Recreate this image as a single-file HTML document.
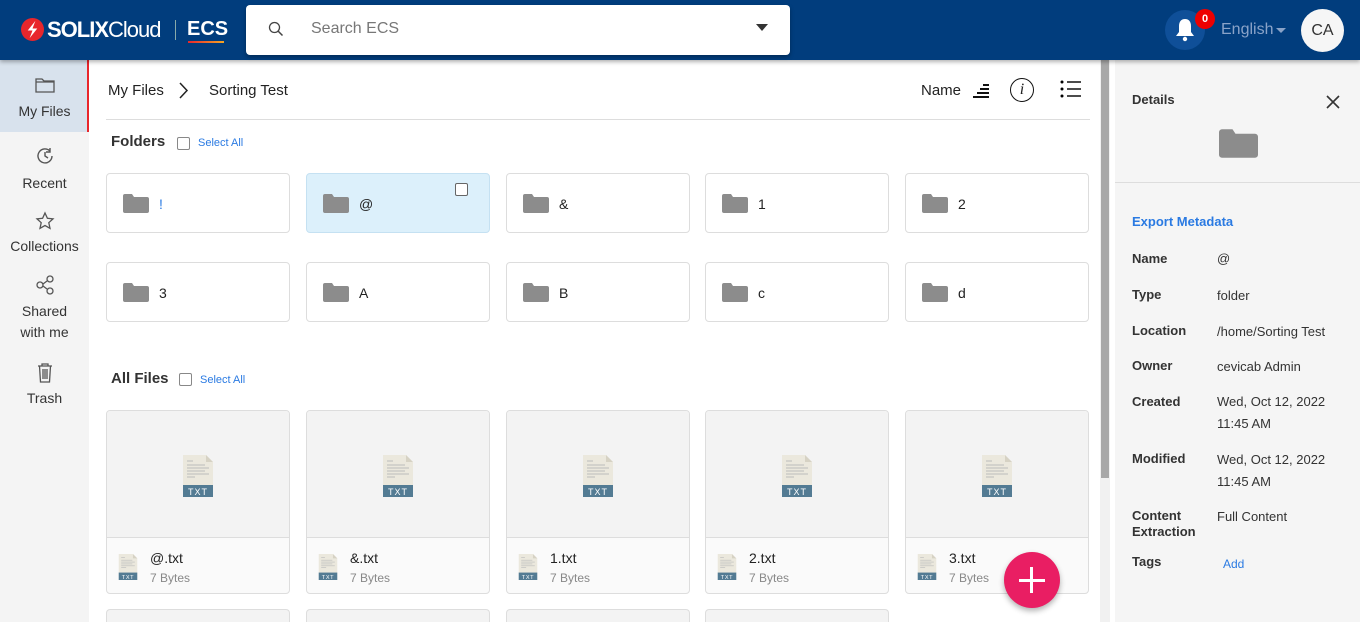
<!DOCTYPE html>
<html style="height:622px;overflow:hidden"><head><meta charset="utf-8"><style>
*{margin:0;padding:0;box-sizing:border-box}
body{width:1360px;height:622px;overflow:hidden;font-family:"Liberation Sans",sans-serif;background:#fff;position:relative;color:#222}
.a{position:absolute}
.hdr{left:0;top:0;width:1360px;height:60px;background:#013d7d;box-shadow:0 2px 4px rgba(0,0,0,.3);z-index:2}
.side{left:0;top:60px;width:89px;height:562px;background:#f4f4f4}
.nav{position:absolute;left:0;width:89px;text-align:center;font-size:14px;color:#333}
.fc{position:absolute;width:184px;height:60px;border:1px solid #ddd;border-radius:4px;background:#fff}
.fc .ic{position:absolute;left:16px;top:20px;width:26px;height:19px}
.fc span{position:absolute;left:52px;top:22px;font-size:14px}
.fl{position:absolute;width:184px;height:184px;border:1px solid #ddd;border-radius:4px;background:#fafafa;overflow:hidden}
.fl .top{height:127px;background:#f3f3f3;border-bottom:1px solid #ddd;position:relative}
.fl .nm{position:absolute;left:43px;top:139px;font-size:14px}
.fl .sz{position:absolute;left:43px;top:160px;font-size:12px;color:#888}
.rp{left:1115px;top:60px;width:245px;height:562px;background:#f5f5f5}
.lb{position:absolute;left:17px;font-size:13px;font-weight:bold;color:#333}
.vl{position:absolute;left:102px;font-size:13px;color:#333;line-height:22px}
</style></head><body>
<div class="a hdr">
 <svg class="a" style="left:21px;top:18px" width="23" height="23" viewBox="0 0 24 24"><circle cx="12" cy="12" r="12" fill="#e8262c"/><path d="M15 3L7 13h5l-3 8 8-10h-5z" fill="#fff"/></svg>
 <div class="a" style="left:47px;top:17px;color:#fff;font-size:22px;letter-spacing:-1px"><b>SOLIX</b>Cloud</div>
 <div class="a" style="left:175px;top:20px;width:1px;height:20px;background:#8aa"></div>
 <div class="a" style="left:187px;top:18px;color:#fff;font-size:20px;font-weight:bold">ECS</div>
 <div class="a" style="left:188px;top:41px;width:36px;height:2px;background:linear-gradient(90deg,#e8262c,#f5a623)"></div>
 <div class="a" style="left:246px;top:5px;width:544px;height:50px;background:#fff;border-radius:4px;box-shadow:0 2px 4px rgba(0,0,0,.3)">
  <svg class="a" style="left:22px;top:16px" width="16" height="16" viewBox="0 0 16 16"><circle cx="6.5" cy="6.5" r="5" stroke="#444" stroke-width="1.3" fill="none"/><path d="M10 10l4.5 4.5" stroke="#444" stroke-width="1.5"/></svg>
  <div class="a" style="left:65px;top:15px;font-size:16px;color:#777">Search ECS</div>
  <div class="a" style="left:510px;top:19px;border:6px solid transparent;border-top:7px solid #333;border-bottom:0"></div>
 </div>
 <div class="a" style="left:1165px;top:10px;width:40px;height:40px;border-radius:50%;background:#0f4f98"></div>
 <svg class="a" style="left:1174px;top:18px" width="22" height="24" viewBox="0 0 22 24"><path d="M11 1c-4 0-6 3-6 7v6l-3 4h18l-3-4V8c0-4-2-7-6-7z" fill="#fff"/><circle cx="11" cy="21" r="2.2" fill="#fff"/></svg>
 <div class="a" style="left:1195px;top:9px;width:20px;height:20px;border-radius:50%;background:#e00;color:#fff;font-size:11px;font-weight:bold;text-align:center;line-height:20px">0</div>
 <div class="a" style="left:1221px;top:21px;font-size:16px;color:#8aa3c8">English</div>
 <div class="a" style="left:1276px;top:28px;border:5px solid transparent;border-top:5px solid #8aa3c8;border-bottom:0"></div>
 <div class="a" style="left:1301px;top:9px;width:43px;height:43px;border-radius:50%;background:#f6f6f6;text-align:center;line-height:43px;font-size:16px;color:#333">CA</div>
</div>
<div class="a side">
 <div class="a" style="left:0;top:0;width:89px;height:72px;background:#d8e2ed;border-right:2px solid #e8262c"></div>
 <div class="nav" style="top:16px"><svg width="22" height="18" viewBox="0 0 22 18"><path d="M2 3h6l2 2h10v11H2z M2 6h18" stroke="#555" stroke-width="1.3" fill="none"/></svg><div style="margin-top:6px">My Files</div></div>
 <div class="nav" style="top:86px"><svg width="20" height="20" viewBox="0 0 20 20"><path d="M17 10a7 7 0 1 1-2-5" stroke="#555" stroke-width="1.4" fill="none"/><path d="M15 2v4h-4" stroke="#555" stroke-width="1.4" fill="none"/><path d="M10 6v4l3 2" stroke="#555" stroke-width="1.4" fill="none"/></svg><div style="margin-top:6px">Recent</div></div>
 <div class="nav" style="top:151px"><svg width="20" height="20" viewBox="0 0 20 20"><path d="M10 2l2.4 5.3 5.6.6-4.2 3.8 1.2 5.6L10 14.5l-5 2.8 1.2-5.6L2 7.9l5.6-.6z" stroke="#555" stroke-width="1.3" fill="none"/></svg><div style="margin-top:4px">Collections</div></div>
 <div class="nav" style="top:215px"><svg width="20" height="20" viewBox="0 0 20 20"><circle cx="15" cy="4" r="3" stroke="#555" stroke-width="1.3" fill="none"/><circle cx="5" cy="10" r="3" stroke="#555" stroke-width="1.3" fill="none"/><circle cx="15" cy="16" r="3" stroke="#555" stroke-width="1.3" fill="none"/><path d="M8 9l4-3M8 11l4 3" stroke="#555" stroke-width="1.3"/></svg><div style="margin-top:3px;line-height:21px">Shared<br>with me</div></div>
 <div class="nav" style="top:302px"><svg width="18" height="22" viewBox="0 0 18 22"><path d="M2 4h14M6 4V2h6v2M3.5 4l1 16h9l1-16M7 7v10M9 7v10M11 7v10" stroke="#555" stroke-width="1.3" fill="none"/></svg><div style="margin-top:3px">Trash</div></div>
</div>
<div class="a" style="left:108px;top:82px;font-size:15px">My Files</div>
<svg class="a" style="left:178px;top:82px" width="12" height="17" viewBox="0 0 12 17"><path d="M2 1l7 7.5L2 16" stroke="#222" stroke-width="1.5" fill="none"/></svg>
<div class="a" style="left:209px;top:82px;font-size:15px">Sorting Test</div>
<div class="a" style="left:921px;top:82px;font-size:15px">Name</div>
<svg class="a" style="left:971px;top:83px" width="20" height="16" viewBox="0 0 20 16"><path d="M12 2h6M9 6h9M6 10h12M2 14h16" stroke="#111" stroke-width="2"/></svg>
<div class="a" style="left:1010px;top:78px;width:24px;height:24px;border:1.5px solid #111;border-radius:50%;text-align:center;font:italic 16px 'Liberation Serif',serif;line-height:21px">i</div>
<svg class="a" style="left:1060px;top:80px" width="22" height="18" viewBox="0 0 22 18"><path d="M7 2h14M7 9h14M7 16h14" stroke="#111" stroke-width="1.6"/><circle cx="2" cy="2" r="1.5"/><circle cx="2" cy="9" r="1.5"/><circle cx="2" cy="16" r="1.5"/></svg>
<div class="a" style="left:106px;top:119px;width:984px;height:1px;background:#ddd"></div>
<div class="a" style="left:111px;top:133px;font-size:15px;font-weight:bold;color:#333">Folders</div>
<div class="a" style="left:177px;top:137px;width:13px;height:13px;border:1px solid #888;border-radius:2px"></div>
<div class="a" style="left:198px;top:137px;font-size:11px;color:#2a7ae2">Select All</div>
<div class="a" style="left:111px;top:370px;font-size:15px;font-weight:bold;color:#333">All Files</div>
<div class="a" style="left:179px;top:373px;width:13px;height:13px;border:1px solid #888;border-radius:2px"></div>
<div class="a" style="left:200px;top:374px;font-size:11px;color:#2a7ae2">Select All</div>
<svg width="0" height="0" style="position:absolute"><defs>
<symbol id="fo" viewBox="0 0 26 19"><path d="M0 2a2 2 0 0 1 2-2h7l2 3h13a2 2 0 0 1 2 2v12a2 2 0 0 1-2 2H2a2 2 0 0 1-2-2z" fill="#8c8c8c"/></symbol>
<symbol id="tx" viewBox="0 0 32 42"><path d="M1 0h23l7 7v24H1z" fill="#ebe8dd"/><path d="M24 0v7h7z" fill="#d6d2c4"/><path d="M5 6h6M5 10h18M5 13h22M5 16h18M5 19h22M5 22h8" stroke="#bbb" stroke-width="1"/><rect x="1" y="30" width="30" height="12" fill="#537b93"/><text x="16" y="40" font-size="9" fill="#fff" text-anchor="middle" font-family="Liberation Sans" letter-spacing="1">TXT</text></symbol>
</defs></svg>
<div class="fc" style="left:106px;top:173px"><svg class="ic"><use href="#fo"/></svg><span style="color:#2a7ae2">!</span></div>
<div class="fc" style="left:306px;top:173px;background:#dcf0fb;border-color:#c5e1f2"><svg class="ic"><use href="#fo"/></svg><span>@</span><div class="a" style="left:148px;top:9px;width:13px;height:13px;border:1px solid #666;border-radius:2px;background:#fff"></div></div>
<div class="fc" style="left:506px;top:173px"><svg class="ic"><use href="#fo"/></svg><span>&amp;</span></div>
<div class="fc" style="left:705px;top:173px"><svg class="ic"><use href="#fo"/></svg><span>1</span></div>
<div class="fc" style="left:905px;top:173px"><svg class="ic"><use href="#fo"/></svg><span>2</span></div>
<div class="fc" style="left:106px;top:262px"><svg class="ic"><use href="#fo"/></svg><span>3</span></div>
<div class="fc" style="left:306px;top:262px"><svg class="ic"><use href="#fo"/></svg><span>A</span></div>
<div class="fc" style="left:506px;top:262px"><svg class="ic"><use href="#fo"/></svg><span>B</span></div>
<div class="fc" style="left:705px;top:262px"><svg class="ic"><use href="#fo"/></svg><span>c</span></div>
<div class="fc" style="left:905px;top:262px"><svg class="ic"><use href="#fo"/></svg><span>d</span></div>
<div class="fl" style="left:106px;top:410px"><div class="top"><svg class="a" style="left:75px;top:44px" width="32" height="42"><use href="#tx"/></svg></div><svg class="a" style="left:11px;top:143px" width="20" height="26" viewBox="0 0 32 42"><use href="#tx"/></svg><div class="nm">@.txt</div><div class="sz">7 Bytes</div></div>
<div class="fl" style="left:306px;top:410px"><div class="top"><svg class="a" style="left:75px;top:44px" width="32" height="42"><use href="#tx"/></svg></div><svg class="a" style="left:11px;top:143px" width="20" height="26" viewBox="0 0 32 42"><use href="#tx"/></svg><div class="nm">&amp;.txt</div><div class="sz">7 Bytes</div></div>
<div class="fl" style="left:506px;top:410px"><div class="top"><svg class="a" style="left:75px;top:44px" width="32" height="42"><use href="#tx"/></svg></div><svg class="a" style="left:11px;top:143px" width="20" height="26" viewBox="0 0 32 42"><use href="#tx"/></svg><div class="nm">1.txt</div><div class="sz">7 Bytes</div></div>
<div class="fl" style="left:705px;top:410px"><div class="top"><svg class="a" style="left:75px;top:44px" width="32" height="42"><use href="#tx"/></svg></div><svg class="a" style="left:11px;top:143px" width="20" height="26" viewBox="0 0 32 42"><use href="#tx"/></svg><div class="nm">2.txt</div><div class="sz">7 Bytes</div></div>
<div class="fl" style="left:905px;top:410px"><div class="top"><svg class="a" style="left:75px;top:44px" width="32" height="42"><use href="#tx"/></svg></div><svg class="a" style="left:11px;top:143px" width="20" height="26" viewBox="0 0 32 42"><use href="#tx"/></svg><div class="nm">3.txt</div><div class="sz">7 Bytes</div></div>
<div class="fl" style="left:106px;top:609px;height:13px;background:#f3f3f3;border-bottom:0;border-radius:4px 4px 0 0"></div>
<div class="fl" style="left:306px;top:609px;height:13px;background:#f3f3f3;border-bottom:0;border-radius:4px 4px 0 0"></div>
<div class="fl" style="left:506px;top:609px;height:13px;background:#f3f3f3;border-bottom:0;border-radius:4px 4px 0 0"></div>
<div class="fl" style="left:705px;top:609px;height:13px;background:#f3f3f3;border-bottom:0;border-radius:4px 4px 0 0"></div>
<div class="a" style="left:1004px;top:552px;width:56px;height:56px;border-radius:50%;background:#e91e63;box-shadow:0 3px 6px rgba(0,0,0,.3)"></div>
<div class="a" style="left:1019px;top:579px;width:26px;height:3px;background:#fff"></div>
<div class="a" style="left:1030px;top:567px;width:3px;height:26px;background:#fff"></div>
<div class="a" style="left:1100px;top:60px;width:10px;height:562px;background:#f1f1f1"></div>
<div class="a" style="left:1101px;top:60px;width:8px;height:418px;background:#a8a8a8"></div>
<div class="a rp">
 <div class="lb" style="top:32px">Details</div>
 <svg class="a" style="left:211px;top:35px" width="14" height="14" viewBox="0 0 14 14"><path d="M1 1l12 12M13 1L1 13" stroke="#333" stroke-width="1.6"/></svg>
 <svg class="a" style="left:104px;top:69px" width="39" height="29"><use href="#fo"/></svg>
 <div class="a" style="left:0;top:122px;width:245px;height:1px;background:#ddd"></div>
 <div class="a" style="left:17px;top:154px;font-size:13px;font-weight:bold;color:#2a7ae2">Export Metadata</div>
 <div class="lb" style="top:191px">Name</div><div class="vl" style="top:188px">@</div>
 <div class="lb" style="top:227px">Type</div><div class="vl" style="top:225px">folder</div>
 <div class="lb" style="top:263px">Location</div><div class="vl" style="top:261px">/home/Sorting Test</div>
 <div class="lb" style="top:298px">Owner</div><div class="vl" style="top:296px">cevicab Admin</div>
 <div class="lb" style="top:334px">Created</div><div class="vl" style="top:331px">Wed, Oct 12, 2022<br>11:45 AM</div>
 <div class="lb" style="top:391px">Modified</div><div class="vl" style="top:389px">Wed, Oct 12, 2022<br>11:45 AM</div>
 <div class="lb" style="top:448px;line-height:16px">Content<br>Extraction</div><div class="vl" style="top:446px">Full Content</div>
 <div class="lb" style="top:494px">Tags</div><div class="a" style="left:108px;top:497px;font-size:12px;color:#2a7ae2">Add</div>
</div>
</body></html>
